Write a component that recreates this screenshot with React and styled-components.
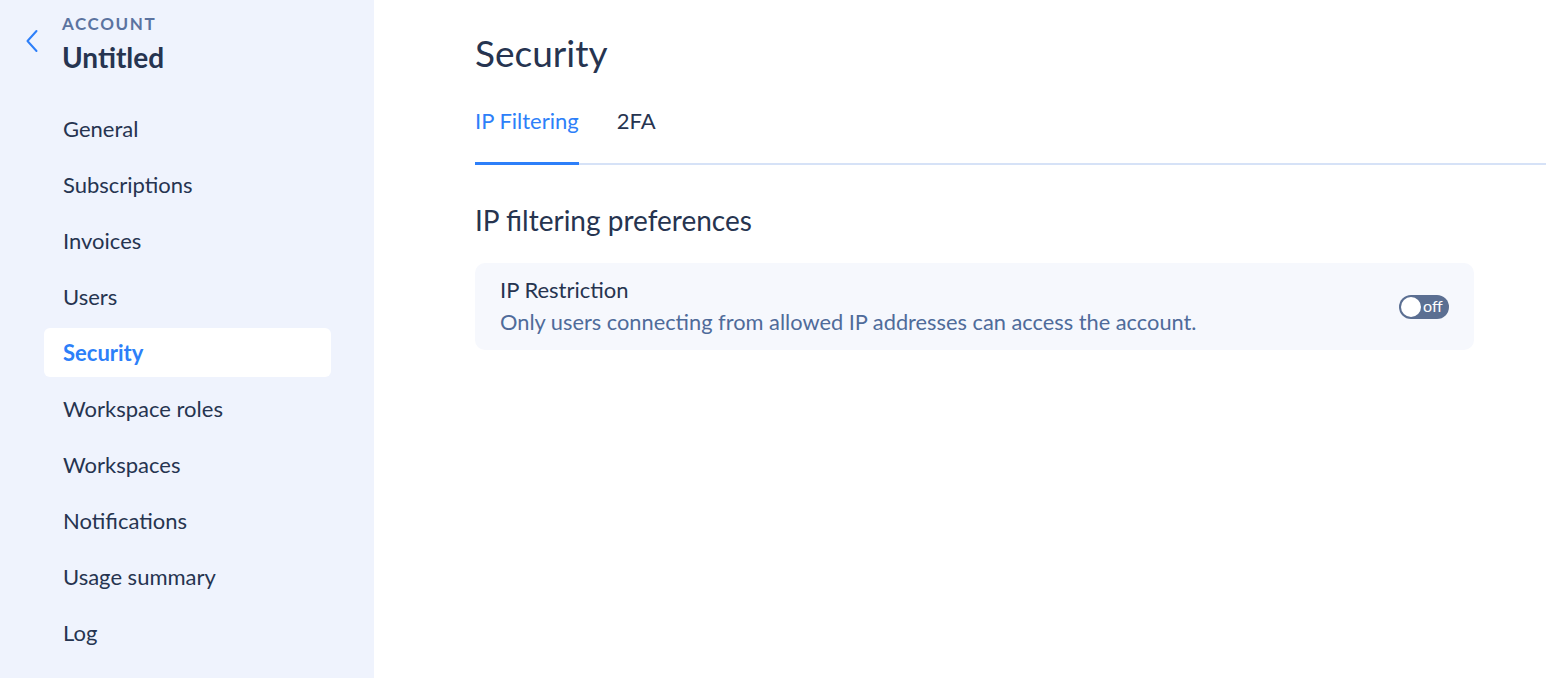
import React from "react";
import styled, { createGlobalStyle } from "styled-components";

const Global = createGlobalStyle`
  html, body { margin: 0; padding: 0; }
  body { font-family: Lato, "Noto Sans", sans-serif; background: #fff; }
  #root { min-height: 678px; }
`;

const Layout = styled.div`
  display: flex;
  height: 678px;
  overflow: hidden;
`;

const Sidebar = styled.aside`
  width: 374px;
  flex-shrink: 0;
  background: #eff3fd;
  padding: 14px 43px 0 44px;
  box-sizing: border-box;
`;

const Header = styled.div`
  display: flex;
  align-items: flex-start;
  margin-left: -20px;
`;

const BackButton = styled.button`
  border: 0;
  background: none;
  padding: 0;
  margin-top: 14px;
  width: 38px;
  height: 26px;
  display: flex;
  justify-content: flex-start;
  align-items: center;
  cursor: pointer;
`;

const Titles = styled.div`
  display: flex;
  flex-direction: column;
`;

const Eyebrow = styled.div`
  font-size: 17px;
  font-weight: 700;
  letter-spacing: 1.6px;
  color: #5b73a0;
  line-height: 20px;
`;

const AccountName = styled.div`
  font-size: 28px;
  font-weight: 700;
  color: #263450;
  line-height: 34px;
  margin-top: 6px;
`;

const Nav = styled.nav`
  display: flex;
  flex-direction: column;
  margin-top: 30px;
  gap: 7px;
`;

const NavItem = styled.div`
  height: 49px;
  display: flex;
  align-items: center;
  padding-left: 19px;
  border-radius: 6px;
  font-size: 22px;
  font-weight: ${(p) => (p.$active ? 700 : 400)};
  color: ${(p) => (p.$active ? "#2d7ff9" : "#263450")};
  background: ${(p) => (p.$active ? "#ffffff" : "transparent")};
`;

const Main = styled.main`
  flex: 1;
  padding: 29px 0 0 101px;
  box-sizing: border-box;
`;

const PageTitle = styled.h1`
  margin: 0;
  font-size: 37px;
  font-weight: 400;
  color: #263450;
  line-height: 48px;
`;

const Tabs = styled.div`
  display: flex;
  gap: 38px;
  margin-top: 30px;
  border-bottom: 2px solid #d6e2f7;
`;

const Tab = styled.div`
  font-size: 22px;
  line-height: 28px;
  padding-bottom: 30px;
  color: ${(p) => (p.$active ? "#2d7ff9" : "#263450")};
  box-shadow: ${(p) => (p.$active ? "inset 0 -3px 0 #2d7ff9" : "none")};
  margin-bottom: -2px;
`;

const SectionTitle = styled.h2`
  margin: 38px 0 0;
  font-size: 28px;
  font-weight: 400;
  color: #263450;
  line-height: 34px;
`;

const Card = styled.div`
  width: 999px;
  margin-top: 26px;
  background: #f6f8fd;
  border-radius: 10px;
  padding: 15px 25px;
  box-sizing: border-box;
  height: 87px;
  display: flex;
  align-items: center;
  justify-content: space-between;
`;

const CardText = styled.div`
  display: flex;
  flex-direction: column;
  margin-top: 2px;
`;

const CardTitle = styled.div`
  font-size: 22px;
  color: #263450;
  line-height: 28px;
  margin-top: -4px;
`;

const CardDesc = styled.div`
  font-size: 21.8px;
  color: #4f6b9a;
  line-height: 28px;
  margin-top: 4px;
`;

const Toggle = styled.div`
  width: 50px;
  height: 24px;
  border-radius: 12px;
  background: #5b6f92;
  display: flex;
  align-items: center;
  padding: 0 2px;
  box-sizing: border-box;
  gap: 2px;
  margin-top: 1px;
`;

const Knob = styled.span`
  width: 20px;
  height: 20px;
  border-radius: 50%;
  background: #fff;
`;

const ToggleLabel = styled.span`
  font-size: 16px;
  color: #fff;
  line-height: 1;
  margin-top: -2px;
`;

const items = [
  "General",
  "Subscriptions",
  "Invoices",
  "Users",
  "Security",
  "Workspace roles",
  "Workspaces",
  "Notifications",
  "Usage summary",
  "Log",
];

export default function App() {
  return (
    <>
      <Global />
      <Layout>
        <Sidebar>
          <Header>
            <BackButton aria-label="Back">
              <svg width="16" height="26" viewBox="0 0 16 26" fill="none">
                <path d="M12.5 3 L3.5 13 L12.5 23" stroke="#2d7ff9" strokeWidth="2" strokeLinecap="round" strokeLinejoin="round" />
              </svg>
            </BackButton>
            <Titles>
              <Eyebrow>ACCOUNT</Eyebrow>
              <AccountName>Untitled</AccountName>
            </Titles>
          </Header>
          <Nav>
            {items.map((it) => (
              <NavItem key={it} $active={it === "Security"}>
                {it}
              </NavItem>
            ))}
          </Nav>
        </Sidebar>
        <Main>
          <PageTitle>Security</PageTitle>
          <Tabs>
            <Tab $active>IP Filtering</Tab>
            <Tab>2FA</Tab>
          </Tabs>
          <SectionTitle>IP filtering preferences</SectionTitle>
          <Card>
            <CardText>
              <CardTitle>IP Restriction</CardTitle>
              <CardDesc>Only users connecting from allowed IP addresses can access the account.</CardDesc>
            </CardText>
            <Toggle>
              <Knob />
              <ToggleLabel>off</ToggleLabel>
            </Toggle>
          </Card>
        </Main>
      </Layout>
    </>
  );
}
